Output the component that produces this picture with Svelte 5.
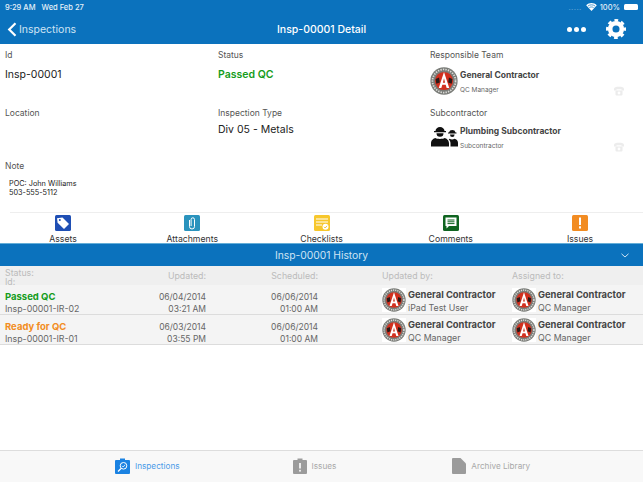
<script lang="ts">
  const history = [
    { status: 'Passed QC', tone: 'passed', id: 'Insp-00001-IR-02', date: '06/04/2014', time: '03:21 AM', by: 'iPad Test User' },
    { status: 'Ready for QC', tone: 'ready', id: 'Insp-00001-IR-01', date: '06/03/2014', time: '03:55 PM', by: 'QC Manager' }
  ];
</script>

{#snippet logo(size)}
  <svg class="logo" width={size} height={size} viewBox="0 0 40 40" aria-hidden="true">
    <rect width="40" height="40" fill="#fff" />
    <circle cx="20" cy="20" r="19.5" fill="#7a7c78" />
    <circle cx="20" cy="20" r="16.5" fill="none" stroke="#dcdcd8" stroke-width="2.5" stroke-dasharray="2 1.6" />
    <circle cx="20" cy="20" r="13" fill="#d2301f" />
    <path d="M20 7 L27.500 30 H23.800 L22.400 25.500 H17.600 L16.200 30 H12.500 Z" fill="#fff" />
    <path d="M20 16 L21.600 22.500 H18.400 Z" fill="#d2301f" />
    <path d="M8 17 L13 15 L14 22 L9 24 Z M32 17 L27 15 L26 22 L31 24 Z" fill="#2a1a18" />
  </svg>
{/snippet}

{#snippet phone()}
  <svg class="phone" width="12" height="10" viewBox="0 0 12 10" aria-hidden="true">
    <path d="M1 3.500 C1 1 3 .8 6 .8 S11 1 11 3.500 V4.500 H8.500 V3.200 H3.500 V4.500 H1 Z" fill="#ececec" />
    <rect x="2.500" y="4.500" width="7" height="5" rx="1" fill="#ececec" />
    <circle cx="6" cy="7" r="1.400" fill="#fff" />
  </svg>
{/snippet}

<div class="page">
  <header class="top">
    <div class="status-bar">
      <span>9:29 AM&nbsp;&nbsp; Wed Feb 27</span>
      <span class="status-right">
        <span class="signal">.....</span>
        <svg width="11" height="8" viewBox="0 0 12 9" aria-hidden="true">
          <path d="M6 9 L0 2.600 C3.400-.8 8.600-.8 12 2.600 Z" fill="#fff" />
          <path d="M2 3.400 C4.300 1.600 7.700 1.600 10 3.400 M3.600 5.200 C5 4.200 7 4.200 8.400 5.200" fill="none" stroke="#0b72bd" stroke-width=".8" />
        </svg>
        <span>100%</span>
        <span class="battery"></span>
      </span>
    </div>
    <div class="nav">
      <div class="back">
        <svg width="10" height="15" viewBox="0 0 10 15" aria-hidden="true">
          <path d="M8.500 1.200 L2.200 7.500 L8.500 13.800" fill="none" stroke="#fff" stroke-width="2.200" />
        </svg>
        <span>Inspections</span>
      </div>
      <div class="title">Insp-00001 Detail</div>
      <div class="nav-actions">
        <span class="dots"><i></i><i></i><i></i></span>
        <svg width="20" height="20" viewBox="0 0 24 24" aria-hidden="true">
          <circle cx="12" cy="12" r="7" fill="none" stroke="#fff" stroke-width="5.500" />
          <circle cx="12" cy="12" r="10.500" fill="none" stroke="#fff" stroke-width="3" stroke-dasharray="4.500 3.750" stroke-dashoffset="2.250" />
        </svg>
      </div>
    </div>
  </header>

  <section class="details">
    <div class="field">
      <div class="label">Id</div>
      <div class="value id-value">Insp-00001</div>
    </div>
    <div class="field">
      <div class="label">Status</div>
      <div class="value id-value passed-big">Passed QC</div>
    </div>
    <div class="field">
      <div class="label">Responsible Team</div>
      <div class="party">
        {@render logo(28)}
        <div class="party-text">
          <div class="party-name">General Contractor</div>
          <div class="party-role">QC Manager</div>
        </div>
        {@render phone()}
      </div>
    </div>
    <div class="field">
      <div class="label">Location</div>
    </div>
    <div class="field">
      <div class="label">Inspection Type</div>
      <div class="value type-value">Div 05 - Metals</div>
    </div>
    <div class="field">
      <div class="label">Subcontractor</div>
      <div class="party party-sub">
        <svg class="crew" width="28" height="22" viewBox="0 0 28 22" aria-hidden="true">
          <path fill="#111" d="M5.500 5 a4.500 4 0 0 1 9 0 h1.500 v1.200 h-12 V5 Z M6.500 7.300 h7 a3.500 3.500 0 0 1-7 0 Z" />
          <path fill="#111" d="M1 20.500 v-3 c0-3.500 2.500-5 4.500-5.500 c1.500 1.200 7.500 1.200 9 0 c2 .5 4.500 2 4.500 5.500 v3 Z" />
          <path fill="#111" d="M19 6.500 a3.300 3 0 0 1 6.500 0 h1 v1 h-8.500 V6.500 Z M20 8.500 h4.600 a2.300 2.500 0 0 1-4.600 0 Z" />
          <path fill="#111" d="M20.500 20.500 v-3 c0-1.800-.6-3-1.800-4 l1-.7 c1 .8 3.600.8 4.800 0 c1.800.5 3.500 1.600 3.500 4 v3.700 Z" />
        </svg>
        <div class="party-text">
          <div class="party-name">Plumbing Subcontractor</div>
          <div class="party-role">Subcontractor</div>
        </div>
        {@render phone()}
      </div>
    </div>
  </section>

  <section class="note">
    <div class="label">Note</div>
    <p>POC: John Williams<br />503-555-5112</p>
  </section>

  <div class="divider"></div>

  <nav class="tools">
    <div class="tool">
      <svg width="16" height="16" viewBox="0 0 16 16" aria-hidden="true">
        <rect width="16" height="16" rx="1.500" fill="#1f4fb4" />
        <path d="M2 3.200 L7.500 2.600 L14 9 L9 14 L2.600 7.800 Z" fill="#fff" />
        <circle cx="4.800" cy="5" r="1" fill="#1f4fb4" />
      </svg>
      <span>Assets</span>
    </div>
    <div class="tool">
      <svg width="16" height="16" viewBox="0 0 16 16" aria-hidden="true">
        <rect width="16" height="16" rx="1.500" fill="#2a93bd" />
        <path d="M5.500 5 V11.500 a2.500 2.500 0 0 0 5 0 V4.500 a1.700 1.700 0 0 0-3.400 0 V11" fill="none" stroke="#fff" stroke-width="1" />
      </svg>
      <span>Attachments</span>
    </div>
    <div class="tool">
      <svg width="16" height="16" viewBox="0 0 16 16" aria-hidden="true">
        <rect width="16" height="16" rx="1.500" fill="#f7c72c" />
        <path d="M2 4 H14 M2 7 H14 M2 10 H8" stroke="#fff" stroke-width="1" />
        <circle cx="11.500" cy="11.800" r="3" fill="#fff" />
        <path d="M10 11.800 L11.200 13 L13 10.800" fill="none" stroke="#f7c72c" stroke-width="1" />
      </svg>
      <span>Checklists</span>
    </div>
    <div class="tool">
      <svg width="16" height="16" viewBox="0 0 16 16" aria-hidden="true">
        <rect width="16" height="16" rx="1.500" fill="#0f6420" />
        <path d="M2.500 2.500 H13.500 V11 H6 L3.500 13.500 V11 H2.500 Z" fill="#fff" />
        <path d="M4.500 5 H11.500 M4.500 6.800 H11.500 M4.500 8.600 H11.500" stroke="#0f6420" stroke-width="1" />
      </svg>
      <span>Comments</span>
    </div>
    <div class="tool">
      <svg width="16" height="16" viewBox="0 0 16 16" aria-hidden="true">
        <rect width="16" height="16" rx="1.500" fill="#f28c22" />
        <rect x="7" y="2.500" width="2" height="7.500" fill="#fff" />
        <rect x="7" y="11.300" width="2" height="2.200" fill="#fff" />
      </svg>
      <span>Issues</span>
    </div>
  </nav>

  <div class="history-bar">
    <span>Insp-00001 History</span>
    <svg class="chevron" width="8" height="5" viewBox="0 0 8 5" aria-hidden="true">
      <path d="M.5 .8 L4 4 L7.500 .8" fill="none" stroke="#cfe4f4" stroke-width="1" />
    </svg>
  </div>

  <div class="table">
    <div class="row head">
      <div class="status-head">Status:<br />Id:</div>
      <div class="num">Updated:</div>
      <div class="num">Scheduled:</div>
      <div></div>
      <div>Updated by:</div>
      <div>Assigned to:</div>
    </div>
    {#each history as item}
      <div class="row item">
        <div class="cell">
          <div class="state {item.tone}">{item.status}</div>
          <div class="sub">{item.id}</div>
        </div>
        <div class="cell num">{item.date}<br />{item.time}</div>
        <div class="cell num">06/06/2014<br />01:00 AM</div>
        <div></div>
        <div class="person">
          {@render logo(24)}
          <div>
            <div class="person-name">General Contractor</div>
            <div class="sub">{item.by}</div>
          </div>
        </div>
        <div class="person">
          {@render logo(24)}
          <div>
            <div class="person-name">General Contractor</div>
            <div class="sub">QC Manager</div>
          </div>
        </div>
      </div>
    {/each}
  </div>

  <footer class="tabs">
    <div class="tab active">
      <svg width="15" height="16" viewBox="0 0 15 16" aria-hidden="true">
        <path d="M1 2 H5 V.5 H10 V2 H14 a1 1 0 0 1 1 1 V15 a1 1 0 0 1-1 1 H1 a1 1 0 0 1-1-1 V3 a1 1 0 0 1 1-1 Z" fill="#1a82e2" />
        <circle cx="8.500" cy="7.800" r="3.300" fill="none" stroke="#fff" stroke-width="1" />
        <path d="M6 10.500 L3 13.500" stroke="#fff" stroke-width="1.200" />
        <path d="M7 7.800 L8.200 9 L10 6.800" fill="none" stroke="#fff" stroke-width=".8" />
      </svg>
      <span>Inspections</span>
    </div>
    <div class="tab">
      <svg width="14" height="16" viewBox="0 0 14 16" aria-hidden="true">
        <path d="M1 2 H4.500 V.5 H9.500 V2 H13 a1 1 0 0 1 1 1 V15 a1 1 0 0 1-1 1 H1 a1 1 0 0 1-1-1 V3 a1 1 0 0 1 1-1 Z" fill="#9b9b9b" />
        <rect x="6.200" y="5" width="1.600" height="5.500" fill="#fff" />
        <rect x="6.200" y="11.800" width="1.600" height="1.800" fill="#fff" />
      </svg>
      <span>Issues</span>
    </div>
    <div class="tab archive">
      <svg width="14" height="16" viewBox="0 0 14 16" aria-hidden="true">
        <path d="M1 0 H8.500 L14 5.500 V15 a1 1 0 0 1-1 1 H1 a1 1 0 0 1-1-1 V1 a1 1 0 0 1 1-1 Z" fill="#9b9b9b" />
      </svg>
      <span>Archive Library</span>
    </div>
  </footer>
</div>

<style>
  :global(body) {
    background: #fff;
  }

  .page {
    color: #222;
    display: flex;
    flex-direction: column;
    font-family: Inter, "Liberation Sans", sans-serif;
    height: 482px;
    overflow: hidden;
    width: 643px;
  }

  .top {
    background: #0b72bd;
    color: #e4f0f8;
    flex: none;
    height: 44px;
  }

  .status-bar {
    align-items: center;
    display: flex;
    font-size: 7.500px;
    font-weight: 500;
    height: 14px;
    justify-content: space-between;
    padding: 0 5px;
  }

  .status-right {
    align-items: center;
    display: flex;
    gap: 3px;
  }

  .signal {
    color: #5fa3d4;
    letter-spacing: .4px;
    margin-right: 1px;
  }

  .battery {
    background: #fff;
    border-radius: 1.500px;
    display: block;
    height: 6px;
    margin-left: 1px;
    width: 14px;
  }

  .nav {
    align-items: center;
    display: grid;
    grid-template-columns: 1fr auto 1fr;
    height: 30px;
  }

  .back {
    align-items: center;
    color: #cfe4f4;
    display: flex;
    font-size: 10.500px;
    gap: 2px;
    padding-left: 7px;
  }

  .title {
    color: #fff;
    font-size: 10.500px;
    font-weight: 500;
  }

  .nav-actions {
    align-items: center;
    display: flex;
    gap: 20px;
    justify-content: flex-end;
    padding-right: 17px;
  }

  .dots {
    display: flex;
    gap: 2px;
  }

  .dots i {
    background: #fff;
    border-radius: 50%;
    display: block;
    height: 5px;
    width: 5px;
  }

  .details {
    display: grid;
    flex: none;
    grid-auto-rows: 58px;
    grid-template-columns: 213px 212px 1fr;
    padding-left: 5px;
  }

  .field {
    padding-top: 5px;
  }

  .label {
    color: #555;
    font-size: 8.500px;
    line-height: 12px;
  }

  .value {
    font-size: 10.500px;
    line-height: 14px;
    margin-top: 3px;
  }

  .id-value {
    margin-top: 6px;
    padding-top: 1px;
  }

  .type-value {
    font-size: 10.500px;
    padding-top: 1px;
  }

  .passed-big {
    color: #159c1b;
    font-weight: 600;
  }

  .party {
    align-items: center;
    display: flex;
    gap: 2px;
    margin-top: 6px;
  }

  .party-sub {
    margin-top: 4px;
  }

  .party-text {
    flex: 1;
    padding-top: 3px;
  }

  .party-name {
    color: #444;
    font-size: 8.500px;
    font-weight: 700;
    line-height: 11px;
  }

  .party-role {
    color: #666;
    font-size: 6.500px;
    line-height: 9px;
    margin-top: 5px;
  }

  .phone {
    align-self: flex-end;
    margin-bottom: -1px;
    margin-right: 18px;
  }

  .note {
    flex: none;
    height: 52px;
    margin-top: -6px;
    padding: 6px 0 0 5px;
  }

  .note p {
    font-size: 7.300px;
    line-height: 9.300px;
    margin: 7px 0 0 4px;
  }

  .divider {
    background: #eee;
    flex: none;
    height: 1px;
    margin-left: 10px;
  }

  .tools {
    display: grid;
    flex: none;
    grid-template-columns: repeat(5, 129.250px);
    height: 30px;
    margin-left: -1.600px;
    width: 646.250px;
  }

  .tool {
    align-items: center;
    color: #333;
    display: flex;
    flex-direction: column;
    font-size: 8.700px;
    gap: 3px;
    line-height: 10px;
    padding-top: 2px;
  }

  .history-bar {
    align-items: center;
    background: #0b72bd;
    border-top: 1px solid #64aed8;
    color: #cfe4f4;
    display: flex;
    flex: none;
    font-size: 10.300px;
    height: 22px;
    justify-content: center;
    position: relative;
  }

  .chevron {
    position: absolute;
    right: 14px;
    top: 9px;
  }

  .table {
    flex: 1;
  }

  .row {
    display: grid;
    grid-template-columns: 125px 76px 112px 64px 130px 1fr;
    padding-left: 5px;
  }

  .head {
    background: #efefef;
    color: #bbb;
    font-size: 8.800px;
    height: 19px;
  }

  .status-head {
    line-height: 9.500px;
    padding-top: 1.500px;
  }

  .head > div:not(.status-head) {
    line-height: 20px;
  }

  .num {
    text-align: right;
  }

  .item {
    align-items: start;
    background: #f4f4f4;
    border-bottom: 1px solid #dcdcdc;
    color: #666;
    font-size: 8.500px;
    height: 29px;
    line-height: 12.500px;
  }

  .cell {
    padding-top: 5.500px;
  }

  .state {
    font-size: 9.500px;
    font-weight: 700;
  }

  .passed {
    color: #159c1b;
  }

  .ready {
    color: #f28c22;
  }

  .sub {
    color: #666;
    font-size: 8.800px;
  }

  .person {
    align-items: flex-start;
    display: flex;
    gap: 2px;
    padding-top: 3px;
  }

  .person > div {
    padding-top: 1px;
  }

  .person-name {
    color: #444;
    font-size: 9.400px;
    font-weight: 700;
  }

  .tabs {
    align-items: center;
    background: #f8f8f8;
    border-top: 1px solid #ddd;
    display: flex;
    flex: none;
    gap: 113px;
    height: 30px;
    padding: 0 0 1px 115px;
  }

  .tab {
    align-items: center;
    color: #a8a8a8;
    display: flex;
    font-size: 8.200px;
    gap: 5px;
  }

  .archive {
    margin-left: 3px;
  }

  .active {
    color: #4a9be8;
  }
</style>
